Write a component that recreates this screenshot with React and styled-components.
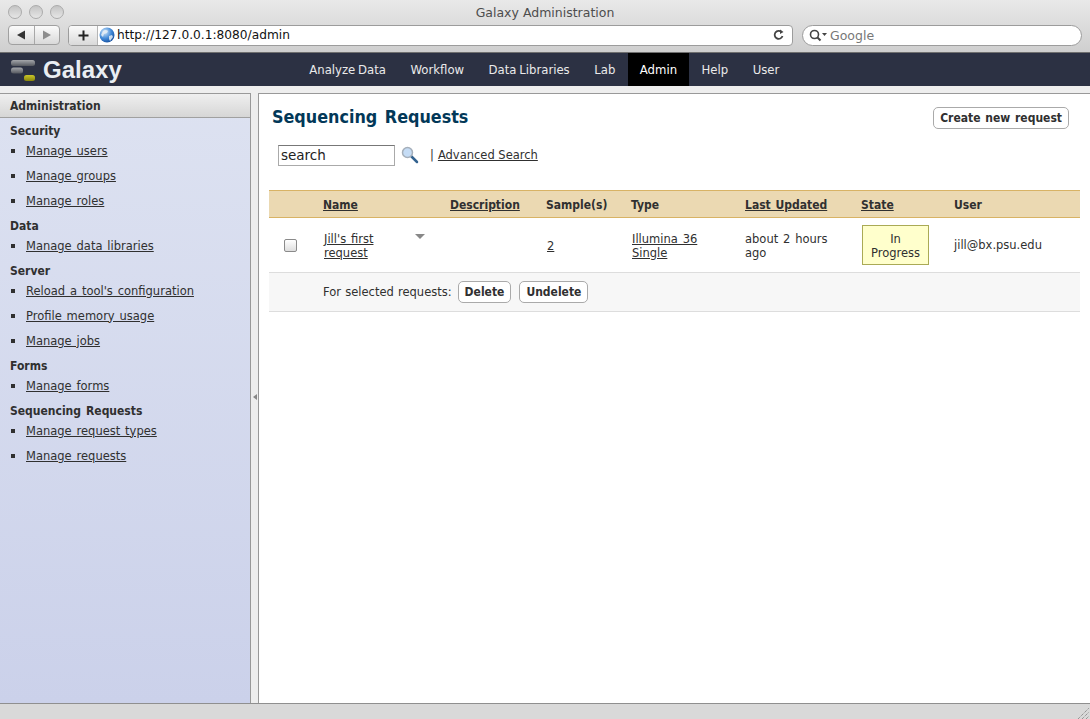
import React from 'react';
import styled, { createGlobalStyle } from 'styled-components';

const Global = createGlobalStyle`
  html, body { margin: 0; padding: 0; height: 100%; overflow: hidden; background: #fff; }
  body { font-family: "DejaVu Sans", "Liberation Sans", sans-serif; font-size: 11.5px; word-spacing: 1.2px; color: #303030; }
  a { color: #303030; text-decoration: underline; }
`;

const boldFont = '"DejaVu Sans Condensed", "DejaVu Sans", sans-serif';

const Window = styled.div`
  width: 1090px;
  height: 719px;
  display: flex;
  flex-direction: column;
  overflow: hidden;
`;

const Chrome = styled.div`
  height: 52px;
  flex: none;
  background: linear-gradient(#e9e9e9, #cfcfcf);
  border-bottom: 1px solid #6f6f6f;
  display: flex;
  flex-direction: column;
`;

const TitleBar = styled.div`
  height: 24px;
  display: flex;
  align-items: center;
  padding-left: 8px;
  position: relative;
`;

const Light = styled.span`
  width: 14px;
  height: 14px;
  box-sizing: border-box;
  margin-right: 7px;
  border-radius: 50%;
  border: 1px solid #ababab;
  background: linear-gradient(#c4c4c4, #e6e6e6);
`;

const WindowTitle = styled.div`
  position: absolute;
  left: 0;
  right: 0;
  top: 5px;
  text-align: center;
  font-size: 12.5px;
  word-spacing: 0;
  color: #4d4d4d;
`;

const ToolRow = styled.div`
  height: 22px;
  display: flex;
  align-items: center;
  padding-left: 8px;
`;

const NavGroup = styled.div`
  display: flex;
  width: 52px;
  height: 20px;
  margin-right: 8px;
  border: 1px solid #a0a0a0;
  border-radius: 4px;
  background: linear-gradient(#fbfbfb, #d9d9d9);
  box-sizing: border-box;
`;

const NavCell = styled.div`
  flex: 1;
  display: flex;
  align-items: center;
  justify-content: center;
  border-left: ${p => (p.$split ? '1px solid #a8a8a8' : 'none')};
`;

const AddressBar = styled.div`
  width: 725px;
  height: 21px;
  box-sizing: border-box;
  border: 1px solid #9c9c9c;
  border-radius: 4px;
  display: flex;
  align-items: center;
  background: #fff;
  overflow: hidden;
`;

const PlusCell = styled.div`
  width: 28px;
  height: 100%;
  flex: none;
  margin-right: 1px;
  border-right: 1px solid #b5b5b5;
  display: flex;
  align-items: center;
  justify-content: center;
  background: linear-gradient(#fbfbfb, #d9d9d9);
`;

const Url = styled.span`
  font-size: 12.2px;
  word-spacing: 0;
  color: #111;
  margin-left: 2px;
  flex: 1;
`;

const SearchPill = styled.div`
  width: 280px;
  height: 21px;
  margin-left: 9px;
  box-sizing: border-box;
  border: 1px solid #9c9c9c;
  border-radius: 11px;
  background: #fff;
  display: flex;
  align-items: center;
  padding-left: 6px;
  gap: 3px;
  color: #777;
  font-size: 12.5px;
`;

const Masthead = styled.div`
  height: 33px;
  flex: none;
  background: #2c3143;
  display: flex;
  position: relative;
`;

const Brand = styled.div`
  width: 297px;
  display: flex;
  align-items: center;
  padding-left: 10px;
  box-sizing: border-box;
  gap: 7px;
  color: #eaeef2;
  font-size: 24px;
  font-weight: bold;
  font-family: "Liberation Sans", sans-serif;
`;

const NavItem = styled.div`
  padding: 0 12.25px;
  display: flex;
  align-items: center;
  font-size: 11.7px;
  word-spacing: -1px;
  font-weight: 500;
  color: ${p => (p.$active ? '#fff' : '#eaeaea')};
  background: ${p => (p.$active ? '#000' : 'transparent')};
`;

const Body = styled.div`
  flex: 1;
  min-height: 0;
  display: flex;
  background: #eee;
  padding-top: 7px;
  border-bottom: 1px solid #8f8f8f;
`;

const Side = styled.div`
  width: 250px;
  flex: none;
  border-top: 1px solid #999;
  border-right: 1px solid #999;
  background: linear-gradient(#dde2f1, #cbd1ea);
`;

const SideHead = styled.div`
  height: 24px;
  box-sizing: border-box;
  padding: 5px 10px 0;
  font: bold 12px ${boldFont};
  background: linear-gradient(#efefef, #d6d6d6);
  border-bottom: 1px solid #a0a0a0;
`;

const SideTitle = styled.div`
  font: bold 12px/14px ${boldFont};
  height: 14px;
  margin: ${p => (p.$first ? '6px' : '0')} 0 0 10px;
`;

const SideList = styled.ul`
  list-style: none;
  margin: 0 0 6px;
  padding: 0;
`;

const SideItem = styled.li`
  height: 25px;
  display: flex;
  align-items: center;
  padding-left: 11px;
  a { margin-left: 11px; }
  &::before { content: ''; width: 4px; height: 4px; background: #303030; }
`;

const Splitter = styled.div`
  width: 7px;
  flex: none;
  display: flex;
  align-items: center;
  justify-content: center;
  padding-bottom: 2px;
`;

const Grip = styled.span`
  border-style: solid;
  border-width: 3px 4px 3px 0;
  border-color: transparent #888 transparent transparent;
`;

const Main = styled.div`
  flex: 1;
  border-left: 1px solid #999;
  border-top: 1px solid #999;
  background: #fff;
  padding: 0 10px;
`;

const HeadRow = styled.div`
  display: flex;
  justify-content: space-between;
  align-items: flex-start;
  padding: 13px 11px 0 3px;
`;

const Heading = styled.h2`
  margin: 0;
  font: bold 17.8px/20px ${boldFont};
  word-spacing: 2px;
  color: #023858;
`;

const Button = styled.button`
  font: bold 12px ${boldFont};
  color: #303030;
  height: 22px;
  padding: 0 6px;
  background: #fff;
  border: 1px solid #aaa;
  border-radius: 5px;
  word-spacing: 1px;
`;

const SearchRow = styled.div`
  display: flex;
  align-items: center;
  height: 22px;
  margin: 15px 0 0 9px;
  a { word-spacing: 0; }
`;

const SearchInput = styled.div`
  width: 117px;
  height: 21px;
  box-sizing: border-box;
  border: 1px solid #aaa;
  border-top-color: #777;
  margin-right: 6px;
  padding-left: 2px;
  font-size: 13.5px;
  line-height: 19px;
  color: #222;
`;

const Pipe = styled.span`
  margin: 0 4px 0 11px;
`;

const Table = styled.div`
  margin-top: 24px;
`;

const Row = styled.div`
  display: grid;
  grid-template-columns: 54px 127px 96px 85px 114px 116px 93px 1fr;
  align-items: center;
`;

const HeadCells = styled(Row)`
  height: 28px;
  box-sizing: border-box;
  padding-top: 1px;
  background: #ebd9b2;
  border-top: 1px solid #d8b365;
  border-bottom: 1px solid #d8b365;
  font: bold 12px ${boldFont};
  word-spacing: 1px;
  a { font-weight: bold; }
`;

const DataRow = styled(Row)`
  height: 54px;
  border-bottom: 1px solid #ddd;
  line-height: 14px;
`;

const Check = styled.span`
  width: 11px;
  height: 11px;
  margin-left: 15px;
  border: 1px solid #8a8a8a;
  border-radius: 2px;
  background: linear-gradient(#fff, #dedede);
`;

const TextCell = styled.div`
  padding-top: 2px;
  padding-left: ${p => (p.$inset ? '1px' : '0')};
  a { display: inline-block; }
`;

const NameCell = styled(TextCell)`
  display: flex;
  justify-content: space-between;
  align-items: flex-start;
  padding-left: 1px;
  padding-right: 25px;
`;

const Caret = styled.span`
  margin-top: 2px;
  border-style: solid;
  border-width: 5px 5px 0;
  border-color: #888 transparent transparent;
`;

const StateBadge = styled.div`
  width: 65px;
  height: 38px;
  margin-left: 1px;
  background: #ffffcc;
  border: 1px solid #aaaa55;
  line-height: 14px;
  display: flex;
  align-items: center;
  justify-content: center;
  text-align: center;
`;

const ActionRow = styled.div`
  height: 38px;
  padding-left: 54px;
  display: flex;
  align-items: center;
  gap: 8px;
  background: #f7f7f7;
  border-bottom: 1px solid #ddd;
`;

const ActionLabel = styled.span`
  word-spacing: 0.6px;
  margin-right: -2px;
`;

const Footer = styled.div`
  height: 15px;
  flex: none;
  background: #d9d9d9;
  display: flex;
  justify-content: flex-end;
`;

const sideSections = [
  { title: 'Security', items: ['Manage users', 'Manage groups', 'Manage roles'] },
  { title: 'Data', items: ['Manage data libraries'] },
  { title: 'Server', items: ["Reload a tool's configuration", 'Profile memory usage', 'Manage jobs'] },
  { title: 'Forms', items: ['Manage forms'] },
  { title: 'Sequencing Requests', items: ['Manage request types', 'Manage requests'] },
];

const navItems = ['Analyze Data', 'Workflow', 'Data Libraries', 'Lab', 'Admin', 'Help', 'User'];

const Globe = () => (
  <svg width="16" height="16" viewBox="0 0 16 16">
    <defs>
      <radialGradient id="g" cx="35%" cy="30%" r="75%">
        <stop offset="0" stopColor="#cfe6fa" />
        <stop offset="0.6" stopColor="#3f87d6" />
        <stop offset="1" stopColor="#17509e" />
      </radialGradient>
    </defs>
    <circle cx="8" cy="8" r="7.5" fill="url(#g)" />
    <path d="M4 4c2-1.500 4-1 5 0l-1 2-3 1-1 3-2-2zM10 9l3-1 1 2-3 4-1-2z" fill="#e8eef5" opacity="0.85" />
  </svg>
);

const Logo = () => (
  <svg width="26" height="22" viewBox="0 0 26 22">
    <defs>
      <linearGradient id="bar" x1="0" y1="0" x2="0" y2="1">
        <stop offset="0" stopColor="#a5a7ab" />
        <stop offset="1" stopColor="#55585f" />
      </linearGradient>
      <linearGradient id="gold" x1="0" y1="0" x2="0" y2="1">
        <stop offset="0" stopColor="#c9c52a" />
        <stop offset="1" stopColor="#8a860a" />
      </linearGradient>
    </defs>
    <rect x="1" y="1" width="24" height="6" rx="2.500" fill="url(#bar)" />
    <rect x="1" y="8.500" width="12" height="6" rx="2.500" fill="url(#bar)" />
    <rect x="14" y="16" width="11" height="6" rx="2.500" fill="url(#gold)" />
  </svg>
);

const Lens = () => (
  <svg width="18" height="18" viewBox="0 0 18 18">
    <line x1="10" y1="10" x2="16" y2="16" stroke="#33628f" strokeWidth="2.500" strokeLinecap="round" />
    <circle cx="6.500" cy="6.500" r="5" fill="#c5dcf5" stroke="#a5afba" strokeWidth="1.500" />
  </svg>
);

export default function App() {
  return (
    <Window>
      <Global />
      <Chrome>
        <TitleBar>
          <Light />
          <Light />
          <Light />
          <WindowTitle>Galaxy Administration</WindowTitle>
        </TitleBar>
        <ToolRow>
          <NavGroup>
            <NavCell>
              <svg width="10" height="10" viewBox="0 0 10 10"><path d="M9 0.500V9.500L1 5z" fill="#333" /></svg>
            </NavCell>
            <NavCell $split>
              <svg width="10" height="10" viewBox="0 0 10 10"><path d="M1 0.500V9.500L9 5z" fill="#8d8d8d" /></svg>
            </NavCell>
          </NavGroup>
          <AddressBar>
            <PlusCell>
              <svg width="11" height="11" viewBox="0 0 11 11"><path d="M5.500 0.500v10M0.500 5.500h10" stroke="#222" strokeWidth="2" /></svg>
            </PlusCell>
            <Globe />
            <Url>http://127.0.0.1:8080/admin</Url>
            <svg width="12" height="12" viewBox="0 0 12 12" style={{ marginRight: 7 }}>
              <path d="M9.500 7a4 4 0 1 1-1-4" fill="none" stroke="#444" strokeWidth="1.800" />
              <path d="M7 0.500l3.500 2.500-3.500 2z" fill="#444" />
            </svg>
          </AddressBar>
          <SearchPill>
            <svg width="18" height="13" viewBox="0 0 18 13">
              <circle cx="5.500" cy="5.500" r="4" fill="none" stroke="#444" strokeWidth="1.600" />
              <path d="M8.500 8.500l3 3" stroke="#444" strokeWidth="2" />
              <path d="M13 4h5l-2.500 3z" fill="#444" />
            </svg>
            Google
          </SearchPill>
        </ToolRow>
      </Chrome>
      <Masthead>
        <Brand>
          <Logo />
          Galaxy
        </Brand>
        {navItems.map(n => (
          <NavItem key={n} $active={n === 'Admin'}>{n}</NavItem>
        ))}
      </Masthead>
      <Body>
        <Side>
          <SideHead>Administration</SideHead>
          {sideSections.map((s, i) => (
            <div key={s.title}>
              <SideTitle $first={i === 0}>{s.title}</SideTitle>
              <SideList>
                {s.items.map(it => (
                  <SideItem key={it}><a href="#">{it}</a></SideItem>
                ))}
              </SideList>
            </div>
          ))}
        </Side>
        <Splitter><Grip /></Splitter>
        <Main>
          <HeadRow>
            <Heading>Sequencing Requests</Heading>
            <Button>Create new request</Button>
          </HeadRow>
          <SearchRow>
            <SearchInput>search</SearchInput>
            <Lens />
            <Pipe>|</Pipe>
            <a href="#">Advanced Search</a>
          </SearchRow>
          <Table>
            <HeadCells>
              <span />
              <a href="#">Name</a>
              <a href="#">Description</a>
              <span>Sample(s)</span>
              <span>Type</span>
              <a href="#">Last Updated</a>
              <a href="#">State</a>
              <span>User</span>
            </HeadCells>
            <DataRow>
              <Check />
              <NameCell>
                <a href="#">Jill's first<br />request</a>
                <Caret />
              </NameCell>
              <span />
              <TextCell $inset><a href="#">2</a></TextCell>
              <TextCell $inset><a href="#">Illumina 36<br />Single</a></TextCell>
              <TextCell>about 2 hours<br />ago</TextCell>
              <StateBadge><TextCell>In<br />Progress</TextCell></StateBadge>
              <span>jill@bx.psu.edu</span>
            </DataRow>
            <ActionRow>
              <ActionLabel>For selected requests:</ActionLabel>
              <Button>Delete</Button>
              <Button>Undelete</Button>
            </ActionRow>
          </Table>
        </Main>
      </Body>
      <Footer>
        <svg width="12" height="12" viewBox="0 0 12 12" style={{ margin: '3px 1px 0 0' }}>
          <path d="M1 12L12 1M5 12L12 5M9 12L12 9" stroke="#777" strokeDasharray="1 1" />
        </svg>
      </Footer>
    </Window>
  );
}
